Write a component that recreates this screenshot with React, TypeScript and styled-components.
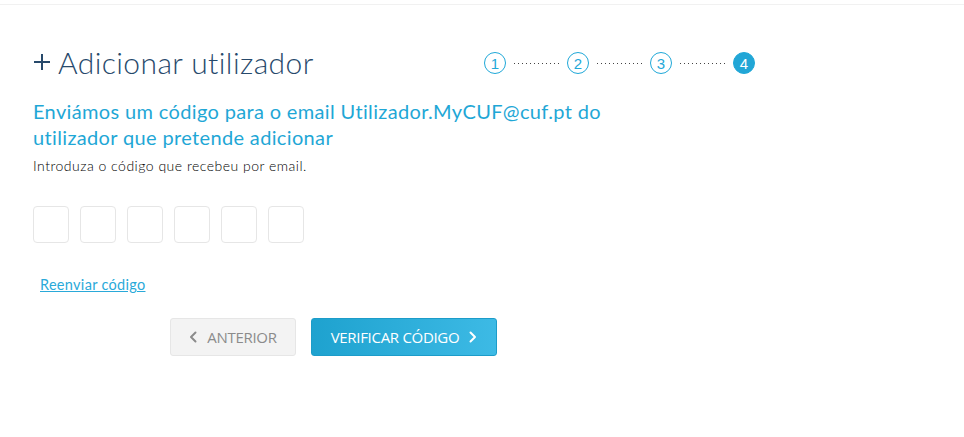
import { Fragment } from "react";
import { createGlobalStyle, styled } from "styled-components";

const GlobalStyle = createGlobalStyle`
    html, body {
        margin: 0;
        padding: 0;
        background: #fff;
        font-family: "Lato", "Noto Sans", sans-serif;
    }
`

const TopBar = styled.div`
    height: 4px;
    border-bottom: 1px solid #f1f1f1;
`

const Page = styled.main`
    padding: 39px 0 0 33px;
`

const Header = styled.div`
    display: flex;
    align-items: center;
    justify-content: space-between;
    width: 722px;
`

const Title = styled.h1`
    margin: 0;
    display: flex;
    align-items: center;
    gap: 7px;
    font-weight: 300;
    font-size: 30px;
    color: #27496b;
    letter-spacing: 0.4px;
`

const Stepper = styled.div`
    display: flex;
    align-items: center;
    gap: 8px;
    margin-top: 2px;
`

const Step = styled.div<{ $active?: boolean }>`
    width: 22px;
    height: 22px;
    box-sizing: border-box;
    border-radius: 50%;
    display: flex;
    align-items: center;
    justify-content: center;
    font-family: "Liberation Sans", Arial, sans-serif;
    font-size: 15px;
    border: 1.5px solid #1fa8d8;
    color: ${p => (p.$active ? "#fff" : "#1fa8d8")};
    background: ${p => (p.$active ? "#22a6d6" : "#fff")};
`

const Dots = styled.span`
    width: 45px;
    height: 1px;
    background: repeating-linear-gradient(90deg, #444 0 1px, transparent 1px 4px);
`

const Lead = styled.p`
    margin: 18px 0 0;
    max-width: 590px;
    font-size: 20px;
    line-height: 26px;
    letter-spacing: 0.35px;
    font-weight: 400;
    color: #1fa7d6;
`

const Hint = styled.p`
    margin: 7px 0 0;
    font-size: 14px;
    letter-spacing: 0.5px;
    font-weight: 300;
    color: #000;
`

const CodeRow = styled.div`
    display: flex;
    gap: 11px;
    margin-top: 32px;
`

const CodeBox = styled.input`
    width: 36px;
    height: 37px;
    box-sizing: border-box;
    border: 1px solid #e6e6e6;
    border-radius: 4px;
    background: #fff;
    outline: none;
    text-align: center;
    font-size: 18px;
    padding: 0;
`

const Resend = styled.a`
    display: inline-block;
    margin: 33px 0 0 7px;
    font-size: 14.5px;
    letter-spacing: 0.3px;
    font-weight: 400;
    color: #2aa9d9;
    text-decoration: underline;
    cursor: pointer;
`

const Actions = styled.div`
    display: flex;
    gap: 15px;
    margin: 25px 0 0 137px;
`

const Button = styled.button<{ $primary?: boolean }>`
    display: flex;
    align-items: center;
    justify-content: center;
    gap: 10px;
    width: ${p => (p.$primary ? "186px" : "126px")};
    height: 38px;
    box-sizing: border-box;
    padding: 0;
    border-radius: 3px;
    font-family: "Open Sans", sans-serif;
    font-size: 15px;
    letter-spacing: -0.3px;
    cursor: pointer;
    border: 1px solid ${p => (p.$primary ? "#1c9cc9" : "#e6e6e6")};
    color: ${p => (p.$primary ? "#fff" : "#8b8b8b")};
    background: ${p => (p.$primary ? "linear-gradient(90deg, #1ea2cf, #3dbae5)" : "#f3f3f3")};
`

function Chevron({ dir, color }: { dir: "left" | "right"; color: string }) {
    return (
        <svg width="8" height="12" viewBox="0 0 8 12" fill="none">
            <path
                d={dir === "left" ? "M6.5 1.5 2 6l4.5 4.5" : "M1.5 1.5 6 6l-4.5 4.5"}
                stroke={color}
                strokeWidth="2"
                strokeLinecap="round"
                strokeLinejoin="round"
            />
        </svg>
    )
}

export default function App() {
    const steps = [1, 2, 3, 4]
    return (
        <>
            <GlobalStyle />
            <TopBar />
            <Page>
                <Header>
                    <Title>
                        <svg width="18" height="18" viewBox="0 0 18 18">
                            <path d="M9 1v16M1 9h16" stroke="#27496b" strokeWidth="2" />
                        </svg>
                        Adicionar utilizador
                    </Title>
                    <Stepper>
                        {steps.map((n, i) => (
                            <Fragment key={n}>
                                {i > 0 && <Dots />}
                                <Step $active={n === 4}>{n}</Step>
                            </Fragment>
                        ))}
                    </Stepper>
                </Header>
                <Lead>Enviámos um código para o email Utilizador.MyCUF@cuf.pt do utilizador que pretende adicionar</Lead>
                <Hint>Introduza o código que recebeu por email.</Hint>
                <CodeRow>
                    {[0, 1, 2, 3, 4, 5].map(i => (
                        <CodeBox key={i} maxLength={1} />
                    ))}
                </CodeRow>
                <Resend>Reenviar código</Resend>
                <Actions>
                    <Button>
                        <Chevron dir="left" color="#8b8b8b" />
                        ANTERIOR
                    </Button>
                    <Button $primary>
                        VERIFICAR CÓDIGO
                        <Chevron dir="right" color="#fff" />
                    </Button>
                </Actions>
            </Page>
        </>
    )
}
